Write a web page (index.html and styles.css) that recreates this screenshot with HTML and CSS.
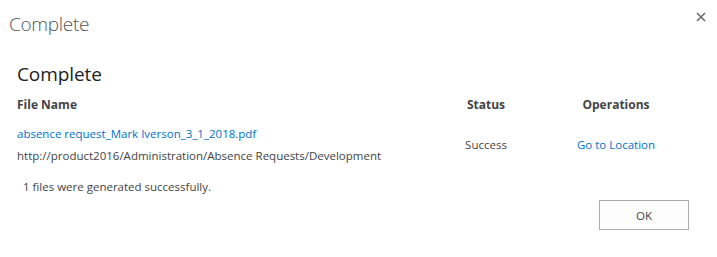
FILE: index.html
```html
<!DOCTYPE html>
<html>
<head>
<meta charset="utf-8">
<link rel="stylesheet" href="styles.css">
</head>
<body>
<div class="dialog">
  <div class="titlebar">
    <div class="title">Complete</div>
    <button class="close" aria-label="Close">
      <svg width="10" height="10" viewBox="0 0 10 10"><path d="M1 1L9 9M9 1L1 9" stroke="#6b6b6b" stroke-width="1.6" fill="none"/></svg>
    </button>
  </div>
  <div class="content">
    <h2 class="heading">Complete</h2>
    <div class="table">
      <div class="row head">
        <div class="c-name">File Name</div>
        <div class="c-status">Status</div>
        <div class="c-ops">Operations</div>
      </div>
      <div class="row item">
        <div class="c-name">
          <a class="link" href="#">absence request_Mark Iverson_3_1_2018.pdf</a>
          <div class="path">http://product2016/Administration/Absence Requests/Development</div>
        </div>
        <div class="c-status">Success</div>
        <div class="c-ops"><a class="link" href="#">Go to Location</a></div>
      </div>
    </div>
    <div class="summary">1 files were generated successfully.</div>
    <div class="actions"><button class="ok">OK</button></div>
  </div>
</div>
</body>
</html>
```
FILE: styles.css
```css
html, body {
  margin: 0;
  padding: 0;
  background: #ffffff;
}
body {
  font-family: "Open Sans", "Noto Sans", sans-serif;
  color: #444444;
  width: 717px;
  height: 257px;
  overflow: hidden;
}
.dialog {
  display: flex;
  flex-direction: column;
}
.titlebar {
  display: flex;
  justify-content: space-between;
  align-items: flex-start;
  padding: 10px 11px 0 9px;
}
.title {
  font-size: 19px;
  font-weight: 300;
  color: #555555;
  line-height: 28px;
  letter-spacing: -0.3px;
}
.close {
  border: 0;
  background: none;
  padding: 0;
  margin-top: 2px;
  width: 10px;
  height: 10px;
  display: flex;
}
.content {
  padding: 0 28px 0 17px;
}
.heading {
  margin: 23px 0 0 0;
  font-size: 19px;
  font-weight: 400;
  color: #222222;
  line-height: 26px;
  letter-spacing: -0.1px;
}
.table {
  display: flex;
  flex-direction: column;
}
.row {
  display: grid;
  grid-template-columns: 414px 110px 150px;
  align-items: center;
}
.head {
  font-size: 12px;
  font-weight: 700;
  color: #444444;
  line-height: 18px;
  margin-top: 9px;
}
.c-status, .c-ops {
  text-align: center;
}
.item {
  margin-top: 9px;
  font-size: 11.5px;
  line-height: 22px;
  color: #444444;
}
.link {
  color: #0072c6;
  text-decoration: none;
}
.c-name .link {
  display: block;
}
.summary {
  margin-top: 12px;
  padding-left: 6px;
  font-size: 11.5px;
  line-height: 16px;
  color: #444444;
}
.actions {
  display: flex;
  justify-content: flex-end;
  margin-top: 5px;
}
.ok {
  width: 90px;
  height: 30px;
  border: 1px solid #ababab;
  background: #fdfdfd;
  font-family: inherit;
  font-size: 11.5px;
  color: #444444;
  padding: 0;
}
```
